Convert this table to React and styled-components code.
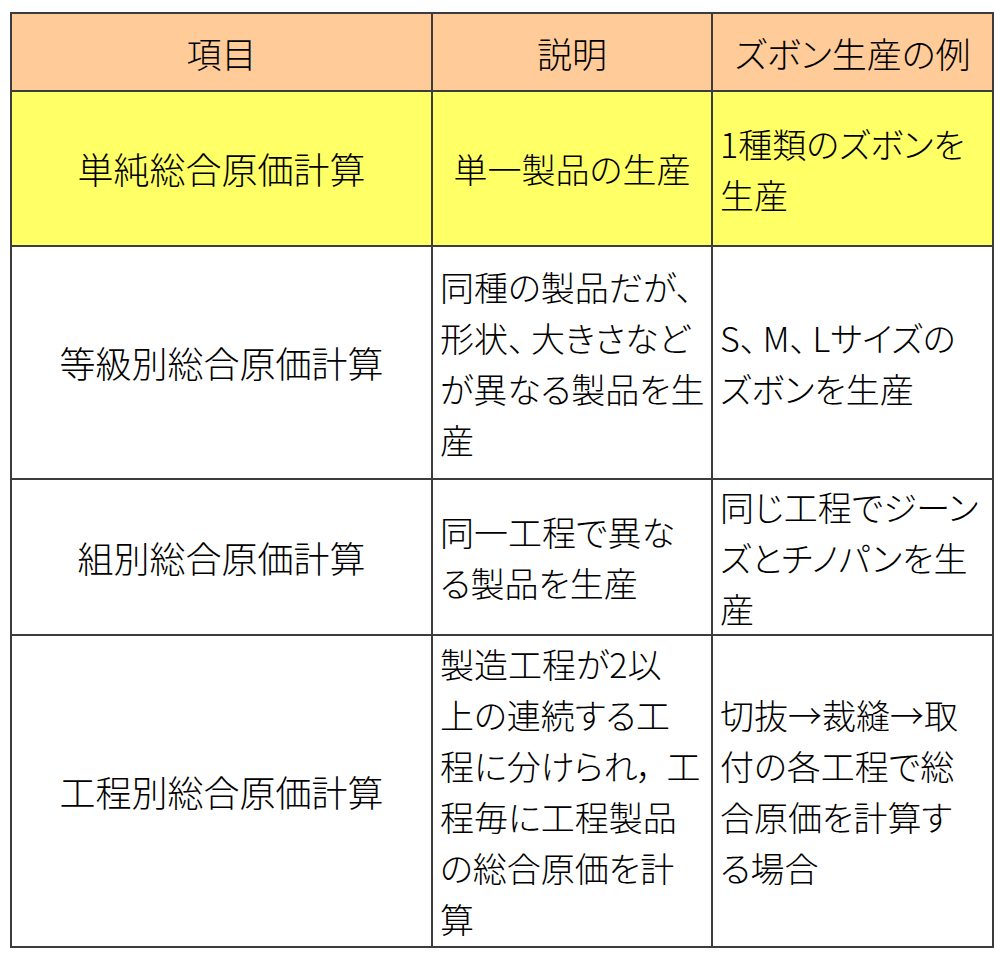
import React from 'react';
import styled, { createGlobalStyle } from 'styled-components';

const Global = createGlobalStyle`
  body {
    margin: 0;
    background: #fff;
    font-family: "Noto Sans CJK JP", "Noto Sans", sans-serif;
  }
`;

const Page = styled.div`
  padding: 12px 0 0 10px;
`;

const Table = styled.table`
  border-collapse: collapse;
  table-layout: fixed;
  width: 982px;
  color: #000;
  font-size: 34px;
  font-weight: 300;
  line-height: 51px;
  font-feature-settings: "palt";
`;

const Row = styled.tr`
  height: ${p => p.h}px;
  background: ${p => p.bg || '#fff'};
`;

const Head = styled.th`
  border: 2px solid #3c3c3c;
  font-weight: 300;
  font-size: 35px;
  text-align: center;
  vertical-align: middle;
  padding: 0;
`;

const Cell = styled.td`
  border: 2px solid #3c3c3c;
  vertical-align: middle;
  text-align: ${p => (p.center ? 'center' : 'left')};
  padding: 0 0 0 ${p => (p.center ? 0 : 7)}px;
  white-space: nowrap;
`;

const NameCell = styled(Cell)`
  font-size: 36px;
`;

const Comma = styled.span`
  margin-right: ${p => (p.wide ? 12 : 6)}px;
`;

const rows = [
  {
    name: '単純総合原価計算',
    h: 155,
    bg: '#ffff66',
    desc: ['単一製品の生産'],
    descCenter: true,
    ex: ['1種類のズボンを', '生産']
  },
  {
    name: '等級別総合原価計算',
    h: 233,
    desc: ['同種の製品だが、', '形状、大きさなど', 'が異なる製品を生', '産'],
    ex: ['S、M、Lサイズの', 'ズボンを生産']
  },
  {
    name: '組別総合原価計算',
    h: 156,
    desc: ['同一工程で異な', 'る製品を生産'],
    ex: ['同じ工程でジーン', 'ズとチノパンを生', '産']
  },
  {
    name: '工程別総合原価計算',
    h: 312,
    desc: ['製造工程が2以', '上の連続する工', '程に分けられ，工', '程毎に工程製品', 'の総合原価を計', '算'],
    ex: ['切抜→裁縫→取', '付の各工程で総', '合原価を計算す', 'る場合']
  }
];

// mid-line commas get a little air after them, as in the source sheet
const withCommas = t =>
  t.split(/([、，])/).map((part, i, all) =>
    (part === '、' || part === '，') && all[i + 1] !== '' ? (
      <Comma key={i} wide={part === '，'}>
        {part}
      </Comma>
    ) : (
      part
    )
  );

const Lines = ({ items }) =>
  items.map((t, i) => (
    <React.Fragment key={i}>
      {i > 0 && <br />}
      {withCommas(t)}
    </React.Fragment>
  ));

export default function App() {
  return (
    <Page>
      <Global />
      <Table>
        <colgroup>
          <col style={{ width: 421 }} />
          <col style={{ width: 280 }} />
          <col style={{ width: 281 }} />
        </colgroup>
        <thead>
          <Row h={78} bg="#ffcc99">
            <Head>項目</Head>
            <Head>説明</Head>
            <Head>ズボン生産の例</Head>
          </Row>
        </thead>
        <tbody>
          {rows.map(r => (
            <Row key={r.name} h={r.h} bg={r.bg}>
              <NameCell center>{r.name}</NameCell>
              <Cell center={r.descCenter}>
                <Lines items={r.desc} />
              </Cell>
              <Cell>
                <Lines items={r.ex} />
              </Cell>
            </Row>
          ))}
        </tbody>
      </Table>
    </Page>
  );
}
